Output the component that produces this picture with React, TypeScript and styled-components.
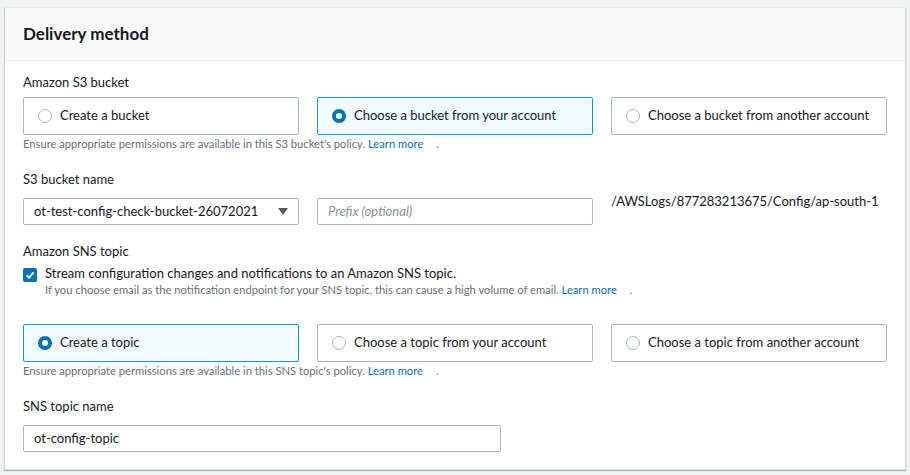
import React from "react";
import styled, { createGlobalStyle } from "styled-components";

const GlobalStyle = createGlobalStyle`
  html, body { margin: 0; padding: 0; background: #f2f3f3; }
  body { font-family: Lato, "Liberation Sans", sans-serif; color: #16191f; }
  * { box-sizing: border-box; }
`;

const Page = styled.div`
  padding: 7px 4px 6px 4px;
  background: #f2f3f3;
`;

const Card = styled.section`
  width: 902px;
  background: #fff;
  border: 1px solid #d5dbdb;
  border-top-color: #eaeded;
  box-shadow: 0 1px 1px rgba(0, 28, 36, 0.3);
`;

const Header = styled.header`
  height: 53px;
  background: #fafafa;
  border-bottom: 1px solid #eaeded;
  padding: 0 18px;
  display: flex;
  align-items: center;
`;

const Title = styled.h2`
  margin: 0;
  font-size: 17px;
  font-weight: 700;
  line-height: 22px;
  color: #16191f;
`;

const Body = styled.div`
  padding: 11px 18px 17px 18px;
`;

const Label = styled.div<{ $mt?: number; $mb?: number }>`
  font-size: 13px;
  line-height: 20px;
  margin-top: ${(p) => p.$mt ?? 0}px;
  margin-bottom: ${(p) => p.$mb ?? 0}px;
  color: #16191f;
`;

const Grid = styled.div<{ $mt?: number }>`
  display: grid;
  grid-template-columns: 276px 276px 276px;
  column-gap: 18px;
  margin-top: ${(p) => p.$mt ?? 0}px;
  align-items: start;
`;

const Tile = styled.div<{ $selected?: boolean }>`
  height: 38px;
  border: 1px solid ${(p) => (p.$selected ? "#00a1c9" : "#aab7b8")};
  background: ${(p) => (p.$selected ? "#f1faff" : "#fff")};
  border-radius: 2px;
  display: flex;
  align-items: center;
  padding: 0 0 2px 14px;
  gap: 8px;
  font-size: 13px;
  white-space: nowrap;
  color: #16191f;
`;

const Radio = styled.span<{ $checked?: boolean }>`
  width: 14px;
  height: 14px;
  margin-top: 2px;
  border-radius: 50%;
  flex: none;
  background: #fff;
  border: ${(p) => (p.$checked ? "4px solid #0073bb" : "1px solid #aab7b8")};
`;

const Help = styled.div<{ $mt?: number }>`
  font-size: 11.2px;
  line-height: 16px;
  color: #687078;
  margin-top: ${(p) => p.$mt ?? 0}px;
`;

const Link = styled.a`
  color: #0073bb;
  text-decoration: none;
`;

const IconGap = styled.span`
  display: inline-block;
  width: 13px;
`;

const Field = styled.div<{ $width?: number }>`
  height: 27px;
  width: ${(p) => (p.$width ? `${p.$width}px` : "auto")};
  border: 1px solid #aab7b8;
  border-radius: 2px;
  background: #fff;
  display: flex;
  align-items: center;
  padding: 0 10px 1px 10px;
  font-size: 13px;
  white-space: nowrap;
  color: #16191f;
`;

const Placeholder = styled.span`
  color: #879596;
  font-style: italic;
`;

const SelectValue = styled.span`
  flex: 1;
`;

const Caret = styled.span`
  width: 0;
  height: 0;
  margin-top: 1px;
  border-left: 5px solid transparent;
  border-right: 5px solid transparent;
  border-top: 7px solid #545b64;
`;

const PathText = styled.div`
  font-size: 13px;
  line-height: 20px;
  margin-top: -7px;
  white-space: nowrap;
  color: #16191f;
`;

const CheckRow = styled.div`
  display: flex;
  gap: 8px;
  margin-top: 2px;
  align-items: flex-start;
`;

const CheckBox = styled.span`
  width: 14px;
  height: 14px;
  margin-top: 5px;
  border-radius: 2px;
  background: #0073bb;
  flex: none;
  display: flex;
  align-items: center;
  justify-content: center;
`;

const CheckText = styled.div`
  font-size: 13px;
  line-height: 20px;
`;

const CheckDesc = styled.div`
  font-size: 11.2px;
  line-height: 14px;
  color: #687078;
`;

const tiles1 = [
  { text: "Create a bucket", selected: false },
  { text: "Choose a bucket from your account", selected: true },
  { text: "Choose a bucket from another account", selected: false },
];

const tiles2 = [
  { text: "Create a topic", selected: true },
  { text: "Choose a topic from your account", selected: false },
  { text: "Choose a topic from another account", selected: false },
];

export default function App() {
  return (
    <>
      <GlobalStyle />
      <Page>
        <Card>
          <Header>
            <Title>Delivery method</Title>
          </Header>
          <Body>
            <Label $mb={5}>Amazon S3 bucket</Label>
            <Grid>
              {tiles1.map((t) => (
                <Tile key={t.text} $selected={t.selected}>
                  <Radio $checked={t.selected} />
                  {t.text}
                </Tile>
              ))}
            </Grid>
            <Help $mt={1}>
              Ensure appropriate permissions are available in this S3 bucket's policy.{" "}
              <Link href="#">Learn more</Link>
              <IconGap />.
            </Help>

            <Label $mt={17} $mb={9}>S3 bucket name</Label>
            <Grid>
              <Field>
                <SelectValue>ot-test-config-check-bucket-26072021</SelectValue>
                <Caret />
              </Field>
              <Field>
                <Placeholder>Prefix (optional)</Placeholder>
              </Field>
              <PathText>/AWSLogs/877283213675/Config/ap-south-1</PathText>
            </Grid>

            <Label $mt={16}>Amazon SNS topic</Label>
            <CheckRow>
              <CheckBox>
                <svg width="10" height="10" viewBox="0 0 10 10">
                  <path d="M1.5 5.2 L4 7.6 L8.6 2.4" fill="none" stroke="#fff" strokeWidth="2" />
                </svg>
              </CheckBox>
              <div>
                <CheckText>Stream configuration changes and notifications to an Amazon SNS topic.</CheckText>
                <CheckDesc>
                  If you choose email as the notification endpoint for your SNS topic, this can cause a high volume of email.{" "}
                  <Link href="#">Learn more</Link>
                  <IconGap />.
                </CheckDesc>
              </div>
            </CheckRow>

            <Grid $mt={27}>
              {tiles2.map((t) => (
                <Tile key={t.text} $selected={t.selected}>
                  <Radio $checked={t.selected} />
                  {t.text}
                </Tile>
              ))}
            </Grid>
            <Help $mt={1}>
              Ensure appropriate permissions are available in this SNS topic's policy.{" "}
              <Link href="#">Learn more</Link>
              <IconGap />.
            </Help>

            <Label $mt={17} $mb={9}>SNS topic name</Label>
            <Field $width={478}>ot-config-topic</Field>
          </Body>
        </Card>
      </Page>
    </>
  );
}
